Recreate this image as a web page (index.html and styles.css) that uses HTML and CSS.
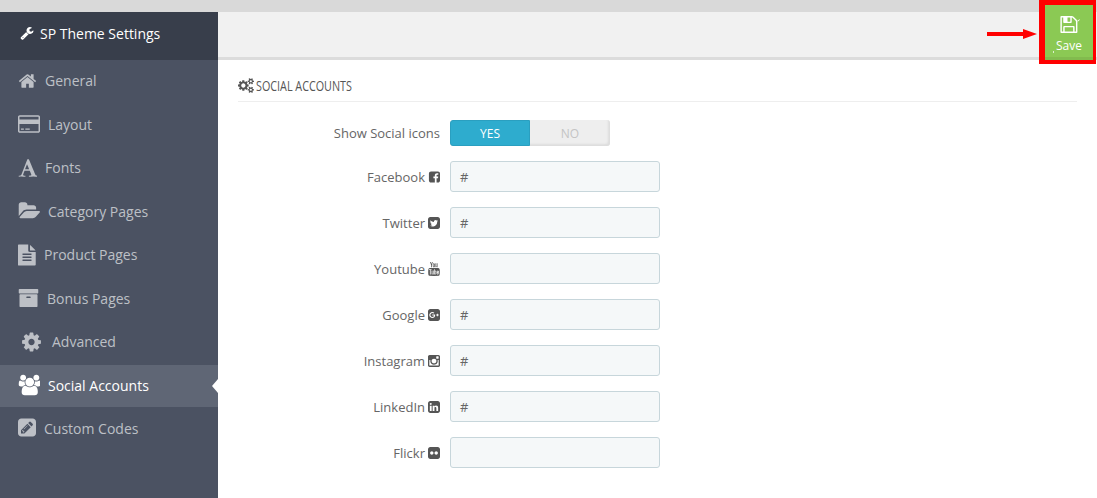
FILE: index.html
```html
<!DOCTYPE html>
<html lang="en">
<head>
<meta charset="utf-8">
<title>SP Theme Settings</title>
<link rel="stylesheet" href="styles.css">
</head>
<body>
<div class="topstrip"></div>
<div class="shell">
  <aside class="sidebar">
    <div class="brand">
      <svg class="brand-icon" viewBox="0 0 1792 1792"><path d="M448 1472q0-26-19-45t-45-19-45 19-19 45 19 45 45 19 45-19 19-45zm644-420l-682 682q-37 37-90 37-52 0-91-37l-106-108q-38-36-38-90 0-53 38-91l681-681q39 98 114.5 173.5t173.5 114.5zm634-435q0 39-23 106-47 134-164.5 217.5t-258.5 83.5q-185 0-316.5-131.5t-131.5-316.5 131.5-316.5 316.5-131.5q58 0 121.5 16.5t107.5 46.5q16 11 16 28t-16 28l-293 169v224l193 107q5-3 79-48.5t135.5-81 70.5-35.5q15 0 23.5 10t8.5 25z"/></svg>
      <span>SP Theme Settings</span>
    </div>
    <nav class="menu">
      <a class="item"><svg class="mi w19" viewBox="0 0 1792 1792"><path d="M1472 992v480q0 26-19 45t-45 19h-384v-384h-256v384h-384q-26 0-45-19t-19-45v-480q0-1 .5-3t.5-3l575-474 575 474q1 2 1 6zm223-69l-62 74q-8 9-21 11h-3q-13 0-21-7l-692-577-692 577q-12 8-24 7-13-2-21-11l-62-74q-8-10-7-23.5t11-21.5l719-599q32-26 76-26t76 26l244 204v-195q0-14 9-23t23-9h192q14 0 23 9t9 23v408l219 182q10 8 11 21.5t-7 23.5z"/></svg><span>General</span></a>
      <a class="item"><svg class="mi w22" viewBox="0 0 1920 1792"><path d="M1760 128q66 0 113 47t47 113v1216q0 66-47 113t-113 47h-1600q-66 0-113-47t-47-113v-1216q0-66 47-113t113-47h1600zm-1600 128q-13 0-22.5 9.5t-9.5 22.5v224h1664v-224q0-13-9.5-22.5t-22.5-9.5h-1600zm1600 1280q13 0 22.5-9.5t9.5-22.5v-608h-1664v608q0 13 9.5 22.5t22.5 9.5h1600zm-1504-128v-128h256v128h-256zm384 0v-128h384v128h-384z"/></svg><span>Layout</span></a>
      <a class="item"><svg class="mi w19" viewBox="0 0 1664 1792"><path d="M789 559l-170 450q33 0 136.5 2t160.5 2q19 0 57-2-87-253-184-452zm-725 1105l2-79q23-7 56-12.5t57-10.5 49.5-14.5 44.5-29 31-50.5l237-616 280-724h128q8 14 11 21l205 480q33 78 106 257.5t114 274.5q15 34 58 144.5t72 168.5q20 45 35 57 19 15 88 29.5t84 20.5q6 38 6 57 0 5-.5 13.5t-.5 12.5q-63 0-190-8t-191-8q-76 0-215 7t-178 8q0-43 4-78l131-28q1 0 12.5-2.5t15.5-3.5 14.5-4.5 15-6.5 11-8 9-11 2.5-14q0-16-31-96.5t-72-177.5-42-100l-450-2q-26 58-76.5 195.5t-50.5 162.5q0 22 14 37.5t43.5 24.5 48.5 13.5 57 8.5 41 4q1 19 1 58 0 9-2 27-58 0-174.5-10t-174.5-10q-8 0-26.5 4t-21.5 4q-80 14-188 14z"/></svg><span>Fonts</span></a>
      <a class="item"><svg class="mi w22" viewBox="0 0 1943 1792"><path d="M1943 952q0 31-31 66l-336 396q-43 51-120.5 86.5t-143.5 35.5h-1088q-34 0-60.5-13t-26.5-43q0-31 31-66l336-396q43-51 120.5-86.5t143.5-35.5h1088q34 0 60.5 13t26.5 43zm-343-344v160h-832q-94 0-197 47.5t-164 119.5l-337 396-5 6q0-4-.5-12.5t-.5-12.5v-960q0-92 66-158t158-66h320q92 0 158 66t66 158v32h544q92 0 158 66t66 158z"/></svg><span>Category Pages</span></a>
      <a class="item"><svg class="mi w18" viewBox="128 0 1536 1792"><path d="M1596 476q14 14 28 36h-472v-472q22 14 36 28zm-476 164h520v1056q0 40-28 68t-68 28h-1344q-40 0-68-28t-28-68v-1600q0-40 28-68t68-28h800v520q0 40 28 68t68 28zm160 736v-64q0-14-9-23t-23-9h-704q-14 0-23 9t-9 23v64q0 14 9 23t23 9h704q14 0 23-9t9-23zm0-256v-64q0-14-9-23t-23-9h-704q-14 0-23 9t-9 23v64q0 14 9 23t23 9h704q14 0 23-9t9-23zm0-256v-64q0-14-9-23t-23-9h-704q-14 0-23 9t-9 23v64q0 14 9 23t23 9h704q14 0 23-9t9-23z"/></svg><span>Product Pages</span></a>
      <a class="item"><svg class="mi w21" viewBox="0 0 1792 1792"><path d="M1088 832q0-26-19-45t-45-19h-256q-26 0-45 19t-19 45 19 45 45 19h256q26 0 45-19t19-45zm576-192v960q0 26-19 45t-45 19h-1408q-26 0-45-19t-19-45v-960q0-26 19-45t45-19h1408q26 0 45 19t19 45zm64-448v256q0 26-19 45t-45 19h-1536q-26 0-45-19t-19-45v-256q0-26 19-45t45-19h1536q26 0 45 19t19 45z"/></svg><span>Bonus Pages</span></a>
      <a class="item indent"><svg class="mi w19" viewBox="128 0 1536 1792"><path d="M1152 896q0-106-75-181t-181-75-181 75-75 181 75 181 181 75 181-75 75-181zm512-109v222q0 12-8 23t-20 13l-185 28q-19 54-39 91 35 50 107 138 10 12 10 25t-9 23q-27 37-99 108t-94 71q-12 0-26-9l-138-108q-44 23-91 38-16 136-29 186-7 28-36 28h-222q-14 0-24.5-8.5t-11.5-21.5l-28-184q-49-16-90-37l-141 107q-10 9-25 9-14 0-25-11-126-114-165-168-7-10-7-23 0-12 8-23 15-21 51-66.5t54-70.5q-27-50-41-99l-183-27q-13-2-21-12.5t-8-23.5v-222q0-12 8-23t19-13l186-28q14-46 39-92-40-57-107-138-10-12-10-24 0-10 9-23 26-36 98.5-107.5t94.5-71.5q13 0 26 10l138 107q44-23 91-38 16-136 29-186 7-28 36-28h222q14 0 24.5 8.5t11.5 21.5l28 184q49 16 90 37l142-107q9-9 24-9 13 0 25 10 129 119 165 170 7 8 7 22 0 12-8 23-15 21-51 66.5t-54 70.5q26 50 41 98l183 28q13 2 21 12.5t8 23.5z"/></svg><span>Advanced</span></a>
      <a class="item active"><svg class="mi w22" viewBox="0 0 1920 1792"><path d="M657 896q-162 5-265 128h-134q-82 0-138-40.5t-56-118.5q0-353 124-353 6 0 43.5 21t97.5 42.5 119 21.5q67 0 133-23-5 37-5 66 0 139 81 256zm1071 637q0 120-73 189.5t-194 69.5h-874q-121 0-194-69.5t-73-189.5q0-53 3.5-103.5t14-109 26.5-108.5 43-97.5 62-81 85.5-53.5 111.5-20q10 0 43 21.5t73 48 107 48 135 21.5 135-21.5 107-48 73-48 43-21.5q61 0 111.5 20t85.5 53.5 62 81 43 97.5 26.5 108.5 14 109 3.5 103.5zm-1024-1277q0 106-75 181t-181 75-181-75-75-181 75-181 181-75 181 75 75 181zm704 384q0 159-112.5 271.5t-271.5 112.5-271.5-112.5-112.5-271.5 112.5-271.5 271.5-112.5 271.5 112.5 112.5 271.5zm576 225q0 78-56 118.5t-138 40.5h-134q-103-123-265-128 81-117 81-256 0-29-5-66 66 23 133 23 59 0 119-21.5t97.5-42.5 43.5-21q124 0 124 353zm-128-609q0 106-75 181t-181 75-181-75-75-181 75-181 181-75 181 75 75 181z"/></svg><span>Social Accounts</span></a>
      <a class="item"><svg class="mi w18" viewBox="0 128 1536 1536"><path d="M404 980l152 152-52 52h-56v-96h-96v-56zm414-390q14 13-3 30l-291 291q-17 17-30 3-14-13 3-30l291-291q17-17 30-3zm-274 690l544-544-288-288-544 544v288h288zm608-608l92-92q28-28 28-68t-28-68l-152-152q-28-28-68-28t-68 28l-92 92zm384-384v960q0 119-84.5 203.5t-203.5 84.5h-960q-119 0-203.5-84.5t-84.5-203.5v-960q0-119 84.5-203.5t203.5-84.5h960q119 0 203.5 84.5t84.5 203.5z"/></svg><span>Custom Codes</span></a>
    </nav>
  </aside>
  <main class="main">
    <div class="toolbar"></div>
    <section class="panel">
      <h2 class="panel-title">
        <svg class="cogs" viewBox="0 0 1920 1792"><path d="M896 896q0-106-75-181t-181-75-181 75-75 181 75 181 181 75 181-75 75-181zm768 512q0-52-38-90t-90-38-90 38-38 90q0 53 37.5 90.5t90.5 37.5 90.5-37.5 37.5-90.5zm0-1024q0-52-38-90t-90-38-90 38-38 90q0 53 37.5 90.5t90.5 37.5 90.5-37.5 37.5-90.5zm-384 421v185q0 10-7 19.5t-16 10.5l-155 24q-11 35-32 76 34 48 90 115 7 11 7 20 0 12-7 19-23 30-82.5 89.5t-78.5 59.5q-11 0-21-7l-115-90q-37 19-77 31-11 108-23 155-7 24-30 24h-186q-11 0-20-7.5t-10-17.5l-23-153q-34-10-75-31l-118 89q-7 7-20 7-11 0-21-8-144-133-144-160 0-9 7-19 10-14 41-53t47-61q-23-44-35-82l-152-24q-10-1-17-9.5t-7-19.5v-185q0-10 7-19.5t16-10.5l155-24q11-35 32-76-34-48-90-115-7-11-7-20 0-12 7-20 22-30 82-89t79-59q11 0 21 7l115 90q34-18 77-32 11-108 23-154 7-24 30-24h186q11 0 20 7.5t10 17.5l23 153q34 10 75 31l118-89q8-7 20-7 11 0 21 8 144 133 144 160 0 8-7 19-12 16-42 54t-45 60q23 48 34 82l152 23q10 2 17 10.5t7 19.5zm640 533v140q0 16-149 31-12 27-30 52 51 113 51 138 0 4-4 7-122 71-124 71-8 0-46-47t-52-68q-20 2-30 2t-30-2q-14 21-52 68t-46 47q-2 0-124-71-4-3-4-7 0-25 51-138-18-25-30-52-149-15-149-31v-140q0-16 149-31 13-29 30-52-51-113-51-138 0-4 4-7 4-2 35-20t59-34 30-16q8 0 46 46.5t52 67.5q20-2 30-2t30 2q51-71 92-112l6-2q4 0 124 70 4 3 4 7 0 25-51 138 17 23 30 52 149 15 149 31zm0-1024v140q0 16-149 31-12 27-30 52 51 113 51 138 0 4-4 7-122 71-124 71-8 0-46-47t-52-68q-20 2-30 2t-30-2q-14 21-52 68t-46 47q-2 0-124-71-4-3-4-7 0-25 51-138-18-25-30-52-149-15-149-31v-140q0-16 149-31 13-29 30-52-51-113-51-138 0-4 4-7 4-2 35-20t59-34 30-16q8 0 46 46.5t52 67.5q20-2 30-2t30 2q51-71 92-112l6-2q4 0 124 70 4 3 4 7 0 25-51 138 17 23 30 52 149 15 149 31z"/></svg>
        <span class="title-text">SOCIAL ACCOUNTS</span>
      </h2>
      <div class="form">
        <div class="row switch-row">
          <label class="lbl">Show Social icons</label>
          <div class="switch"><span class="yes">YES</span><span class="no">NO</span></div>
        </div>
        <div class="row">
          <label class="lbl">Facebook<svg class="si" viewBox="0 128 1664 1536"><path d="M1376 128q119 0 203.5 84.5t84.5 203.5v960q0 119-84.5 203.5t-203.5 84.5h-188v-595h199l30-232h-229v-148q0-56 23.5-84t91.5-28l122-1v-207q-63-9-178-9-136 0-217.5 80t-81.5 226v171h-200v232h200v595h-532q-119 0-203.5-84.5t-84.5-203.5v-960q0-119 84.5-203.5t203.5-84.5h960z"/></svg></label>
          <div class="field">#</div>
        </div>
        <div class="row">
          <label class="lbl">Twitter<svg class="si" viewBox="0 128 1536 1536"><path d="M1280 610q-56 25-121 34 68-40 93-117-65 38-134 51-61-66-153-66-87 0-148.5 61.5t-61.5 148.5q0 29 5 48-129-7-242-65t-192-155q-29 50-29 106 0 114 91 175-47-1-100-26v2q0 75 50 133.5t123 72.5q-29 8-51 8-13 0-39-4 21 63 74.5 104t121.5 42q-116 90-261 90-26 0-50-3 148 94 322 94 112 0 210-35.5t168-95 120.5-137 75-162 24.5-168.5q0-18-1-27 63-45 105-109zm256-194v960q0 119-84.5 203.5t-203.5 84.5h-960q-119 0-203.5-84.5t-84.5-203.5v-960q0-119 84.5-203.5t203.5-84.5h960q119 0 203.5 84.5t84.5 203.5z"/></svg></label>
          <div class="field">#</div>
        </div>
        <div class="row">
          <label class="lbl">Youtube<svg class="si tall" viewBox="0 0 1536 1792"><path d="M971 1244v211q0 67-39 67-23 0-45-22v-301q22-22 45-22 39 0 39 67zm338 1v46h-90v-46q0-68 45-68t45 68zm-966-218h107v-94h-312v94h105v569h100v-569zm288 569h89v-494h-89v378q-30 42-57 42-18 0-21-21-1-3-1-35v-364h-89v391q0 49 8 73 12 37 58 37 48 0 102-61v54zm429-148v-197q0-73-9-99-17-56-71-56-50 0-93 54v-217h-89v663h89v-48q45 55 93 55 54 0 71-55 9-27 9-100zm338-10v-13h-91q0 51-2 61-7 36-40 36-46 0-46-69v-87h179v-103q0-79-27-116-39-51-106-51-68 0-107 51-28 37-28 116v173q0 79 29 116 39 51 108 51 72 0 108-53 18-27 21-54 2-9 2-58zm-608-913v-210q0-69-43-69t-43 69v210q0 70 43 70t43-70zm719 751q0 234-26 350-14 59-58 99t-102 46q-184 21-555 21t-555-21q-58-6-102.5-46t-57.5-99q-26-112-26-350 0-234 26-350 14-59 58-99t103-47q183-20 554-20t555 20q58 7 102.5 47t57.5 99q26 112 26 350zm-998-1276h102l-121 399v271h-100v-271q-14-74-61-212-37-103-65-187h106l71 263zm370 333v175q0 81-28 118-37 51-106 51-67 0-105-51-28-38-28-118v-175q0-80 28-117 38-51 105-51 69 0 106 51 28 37 28 117zm335-162v499h-91v-55q-53 62-103 62-46 0-59-37-8-24-8-75v-394h91v367q0 33 1 35 3 22 21 22 27 0 57-43v-381h91z"/></svg></label>
          <div class="field"></div>
        </div>
        <div class="row">
          <label class="lbl">Google<svg class="si" viewBox="0 128 1536 1536"><path d="M917 905q0-26-6-64h-362v132h217q-3 24-16.5 50t-37.5 53-66.5 44.5-96.5 17.5q-99 0-169-71t-70-171 70-171 169-71q92 0 153 59l104-101q-108-100-257-100-160 0-272 112.5t-112 271.5 112 271.5 272 112.5q165 0 266.5-105t101.5-270zm345 46h109v-110h-109v-110h-110v110h-110v110h110v110h110v-110zm274-535v960q0 119-84.5 203.5t-203.5 84.5h-960q-119 0-203.5-84.5t-84.5-203.5v-960q0-119 84.5-203.5t203.5-84.5h960q119 0 203.5 84.5t84.5 203.5z"/></svg></label>
          <div class="field">#</div>
        </div>
        <div class="row">
          <label class="lbl">Instagram<svg class="si" viewBox="128 128 1536 1536"><path d="M1490 1426v-648h-135q20 63 20 131 0 126-64 232.5t-174 168.5-240 62q-197 0-337-135.5t-140-327.5q0-68 20-131h-141v648q0 26 17.5 43.5t43.5 17.5h1069q25 0 43-17.5t18-43.5zm-284-533q0-124-90.5-211.5t-218.5-87.5q-127 0-217.5 87.5t-90.5 211.5 90.5 211.5 217.5 87.5q128 0 218.5-87.5t90.5-211.5zm284-360v-165q0-28-20-48.5t-49-20.5h-174q-29 0-49 20.5t-20 48.5v165q0 29 20 49t49 20h174q29 0 49-20t20-49zm174-208v1142q0 81-58 139t-139 58h-1142q-81 0-139-58t-58-139v-1142q0-81 58-139t139-58h1142q81 0 139 58t58 139z"/></svg></label>
          <div class="field">#</div>
        </div>
        <div class="row">
          <label class="lbl">LinkedIn<svg class="si" viewBox="0 128 1536 1536"><path d="M237 1414h231v-694h-231v694zm246-908q-1-52-36-86t-93-34-94.5 34-36.5 86q0 51 35.5 85.5t92.5 34.5h1q59 0 95-34.5t36-85.5zm585 908h231v-398q0-154-73-233t-193-79q-136 0-209 117h2v-101h-231q3 66 0 694h231v-388q0-38 7-56 15-35 45-59.5t74-24.5q116 0 116 157v371zm468-998v960q0 119-84.5 203.5t-203.5 84.5h-960q-119 0-203.5-84.5t-84.5-203.5v-960q0-119 84.5-203.5t203.5-84.5h960q119 0 203.5 84.5t84.5 203.5z"/></svg></label>
          <div class="field">#</div>
        </div>
        <div class="row">
          <label class="lbl">Flickr<svg class="si" viewBox="0 128 1536 1536"><path d="M1248 128q119 0 203.5 84.5t84.5 203.5v960q0 119-84.5 203.5t-203.5 84.5h-960q-119 0-203.5-84.5t-84.5-203.5v-960q0-119 84.5-203.5t203.5-84.5h960zm-550 768q0-88-62-150t-150-62-150 62-62 150 62 150 150 62 150-62 62-150zm564 0q0-88-62-150t-150-62-150 62-62 150 62 150 150 62 150-62 62-150z"/></svg></label>
          <div class="field"></div>
        </div>
      </div>
    </section>
  </main>
</div>
<div class="callout">
  <svg class="arrow" viewBox="0 0 50 10"><path d="M0 3h36V0l14 5-14 5V7H0z"/></svg>
  <div class="frame">
    <div class="save">
      <svg class="save-icon" viewBox="0 128 1900 1536"><path d="M512 1536h768v-384h-768v384zm896 0h128v-896q0-14-10-38.5t-20-34.5l-281-281q-10-10-34-20t-39-10v416q0 40-28 68t-68 28h-576q-40 0-68-28t-28-68v-416h-128v1280h128v-416q0-40 28-68t68-28h832q40 0 68 28t28 68v416zm-384-928v-320q0-13-9.5-22.5t-22.5-9.5h-192q-13 0-22.5 9.5t-9.5 22.5v320q0 13 9.5 22.5t22.5 9.5h192q13 0 22.5-9.5t9.5-22.5zm640 32v928q0 40-28 68t-68 28h-1344q-40 0-68-28t-28-68v-1344q0-40 28-68t68-28h928q40 0 88 20t76 48l280 280q28 28 48 76t20 88z"/><path d="M1660 560l200-140 30 50-190 170z"/></svg>
      <span class="save-text">Save</span>
    </div>
  </div>
</div>
</body>
</html>
```
FILE: styles.css
```css
* { box-sizing: border-box; }
html, body { margin: 0; padding: 0; height: 100%; overflow: hidden; }
body { background: #fff; font-family: "Open Sans", sans-serif; font-size: 13px; color: #666; position: relative; }
.topstrip { height: 12px; background: #d9d9d9; }
.shell { display: flex; height: 486px; }
.sidebar { width: 218px; flex: none; background: #4b5262; }
.brand { height: 48px; background: #383e4b; color: #fff; display: flex; align-items: center; gap: 6px; padding: 0 0 6px 20px; font-size: 14px; }
.brand-icon { width: 14px; height: 14px; fill: #fff; }
.menu { display: flex; flex-direction: column; gap: 1.5px; padding-top: .5px; }
.item { height: 42px; display: flex; align-items: center; gap: 8px; padding: 0 0 2px 18px; color: #bdc0c6; font-size: 14px; position: relative; }
.item.indent { padding-left: 22px; gap: 11px; }
.item.active { background: #5f6675; color: #fff; }
.item.active::after { content: ""; position: absolute; right: 0; top: 50%; margin-top: -7px; border: 7px solid transparent; border-right-color: #fff; border-left-width: 0; border-right-width: 6px; }
.mi { fill: #bdc0c6; flex: none; height: 22px; }
.active .mi { fill: #fff; }
.w18 { width: 18px; }
.w19 { width: 19px; }
.w21 { width: 21px; }
.w22 { width: 22px; }
.main { flex: 1; min-width: 0; display: flex; flex-direction: column; }
.toolbar { height: 48px; background: #f1f1f1; border-bottom: 3px solid #dcdcdc; }
.panel { padding: 0 20px; }
.panel-title { margin: 0; height: 42px; padding-top: 10px; display: flex; align-items: center; gap: 2px; border-bottom: 1px solid #eee; font-weight: 500; font-size: 14px; color: #555; }
.title-text { transform: scaleX(.77); transform-origin: left center; white-space: nowrap; }
.cogs { width: 16px; height: 15px; fill: #555; }
.form { padding-top: 18px; display: flex; flex-direction: column; gap: 15px; }
.row { display: flex; align-items: center; gap: 10px; height: 31px; }
.switch-row { height: 26px; margin-bottom: 0; }
.lbl { width: 202px; flex: none; display: flex; justify-content: flex-end; align-items: center; gap: 3px; color: #666; font-size: 13px; white-space: nowrap; }
.si { width: 12px; height: 12px; fill: #555; flex: none; }
.si.tall { height: 14px; }
.switch { width: 160px; height: 26px; display: flex; border-radius: 3px; background: #eee; box-shadow: inset -2px -2px 2px #ddd; font-size: 12px; }
.yes { width: 80px; background: #2eacce; color: #fff; border: 1px solid #2a9fc0; border-radius: 3px 0 0 3px; display: flex; align-items: center; justify-content: center; }
.no { width: 80px; color: #c4c4c4; display: flex; align-items: center; justify-content: center; }
.field { width: 210px; height: 31px; background: #f5f8f9; border: 1px solid #c7d6db; border-radius: 3px; padding-left: 9px; display: flex; align-items: center; color: #666; font-size: 13px; }
.callout { position: absolute; top: 0; right: 1px; display: flex; align-items: center; }
.arrow { width: 50px; height: 10px; fill: #f00; margin: 3px 2px 0 0; }
.frame { width: 57px; height: 64px; border: solid #f00; border-width: 5px 3px 4px 6px; }
.save { height: 100%; background: #8bc954; border-bottom: 3px solid #82bb4e; color: #fff; display: flex; flex-direction: column; align-items: center; justify-content: flex-start; padding-top: 11px; font-size: 12px; gap: 4px; }
.save-icon { width: 21px; height: 17px; fill: #fff; margin-left: 1px; }
.save-text { position: relative; }
.save-text::before { content: ""; position: absolute; left: -3px; bottom: 1px; width: 1px; height: 2px; background: #fff; opacity: .7; }
```
